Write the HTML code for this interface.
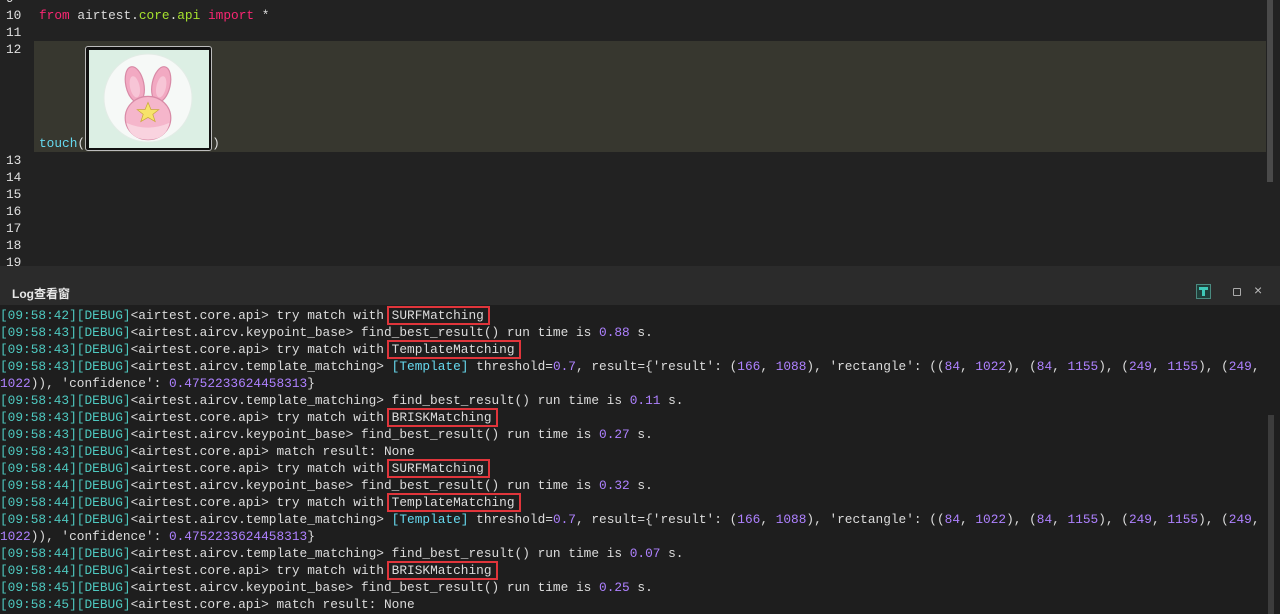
<!DOCTYPE html>
<html><head><meta charset="utf-8"><style>
*{margin:0;padding:0;box-sizing:border-box}
body{width:1280px;height:614px;overflow:hidden;background:#2b2b2b;font-family:"Liberation Mono",monospace;font-size:12.8px;color:#dcdcdc;position:relative}
#ed{position:absolute;left:0;top:0;width:1280px;height:266px;background:#222222;overflow:hidden}
.ln{position:absolute;left:6px;color:#e0e0e0;line-height:17px;font-size:12.8px}
.hl{position:absolute;left:34px;top:41px;width:1232px;height:111px;background:#37372f}
.code{position:absolute;left:39px;line-height:17px;white-space:pre}
.kw{color:#f92672}.gr{color:#a6e22e}.cy{color:#66d9ef}
#sb{position:absolute;left:1267px;top:0;width:6px;height:182px;background:#4a4a4a}
#hdr{position:absolute;left:0;top:278px;width:1280px;height:27px}
#hdr .t{position:absolute;left:12px;top:7px;font-family:"Liberation Sans","Noto Sans CJK SC",sans-serif;font-weight:bold;font-size:12px;color:#e8e8e8}
#log{position:absolute;left:0;top:305px;width:1280px;height:309px;background:#1e1e1e}
.l{position:absolute;left:0;line-height:17px;white-space:pre}
.c{color:#4ec9c0}.n{color:#ae81ff}.b{color:#66d9ef}
.box{outline:2px solid #e0353b;outline-offset:0px;padding:0 4px 0 3px;margin-left:-3px}
#lsb{position:absolute;left:1268px;top:415px;width:6px;height:199px;background:#3c3c3c}
</style></head><body>
<div id="ed">
<div class="ln" style="top:-10px">9</div>
<div class="ln" style="top:7px">10</div>
<div class="ln" style="top:24px">11</div>
<div class="ln" style="top:41px">12</div>
<div class="ln" style="top:152px">13</div>
<div class="ln" style="top:169px">14</div>
<div class="ln" style="top:186px">15</div>
<div class="ln" style="top:203px">16</div>
<div class="ln" style="top:220px">17</div>
<div class="ln" style="top:237px">18</div>
<div class="ln" style="top:254px">19</div>
<div class="code" style="top:7px"><span class="kw">from</span> airtest.<span class="gr">core</span>.<span class="gr">api</span> <span class="kw">import</span> *</div>
<div class="hl"></div>
<div class="code" style="top:135px"><span class="cy">touch</span>(<span style="display:inline-block;width:127px"></span>)</div>
<div style="position:absolute;left:85px;top:46px;width:127px;height:105px;border:1px solid #bdbdbd;border-radius:3px;background:#111;padding:3px">
<svg width="120" height="98" viewBox="0 0 120 98" style="display:block">
<rect width="120" height="98" fill="#dcefe4"/>
<circle cx="59" cy="48" r="44" fill="#f6f9f7" stroke="#e3ece6"/>
<g transform="translate(59 56) scale(1.2) translate(-59 -50)">
<ellipse cx="48" cy="32" rx="7.5" ry="15" fill="#f2a9c2" stroke="#d88aa6" transform="rotate(-12 48 32)"/>
<ellipse cx="70" cy="32" rx="7.5" ry="15" fill="#f2a9c2" stroke="#d88aa6" transform="rotate(12 70 32)"/>
<ellipse cx="48" cy="34" rx="4" ry="9" fill="#f7c5d6" transform="rotate(-12 48 34)"/>
<ellipse cx="70" cy="34" rx="4" ry="9" fill="#f7c5d6" transform="rotate(12 70 34)"/>
<ellipse cx="59" cy="60" rx="19" ry="18" fill="#f5b6cb" stroke="#d88aa6"/>
<path d="M41 64 Q59 72 77 64 Q74 78 59 78 Q44 78 41 64Z" fill="#f9d3df"/>
<polygon points="59,47 61.5,53 68,53 63,57 65,63 59,59.5 53,63 55,57 50,53 56.5,53" fill="#f7e36a" stroke="#c9a83a" stroke-width="0.6"/>
</g>
</svg></div>
<div id="sb"></div>
</div>
<div id="hdr"><div class="t">Log查看窗</div>
<div style="position:absolute;left:1196px;top:6px;width:15px;height:15px;border:1px solid #4a8a80;background:#1f3f3a"><div style="position:absolute;left:2px;top:2px;width:9px;height:3px;background:#3fc9b8"></div><div style="position:absolute;left:5px;top:5px;width:3px;height:6px;background:#3fc9b8"></div></div>
<div style="position:absolute;left:1233px;top:10px;width:8px;height:8px;border:1px solid #aaa;border-radius:1px"></div>
<div style="position:absolute;left:1254px;top:4px;color:#bbb;font-family:'Liberation Sans',sans-serif;font-size:14px">×</div>
</div>
<div id="log">
<div class="l" style="top:2px"><span class="c">[09:58:42][DEBUG]</span>&lt;airtest.core.api&gt; try match with <span class="box">SURFMatching</span></div>
<div class="l" style="top:19px"><span class="c">[09:58:43][DEBUG]</span>&lt;airtest.aircv.keypoint_base&gt; find_best_result() run time is <span class="n">0.88</span> s.</div>
<div class="l" style="top:36px"><span class="c">[09:58:43][DEBUG]</span>&lt;airtest.core.api&gt; try match with <span class="box">TemplateMatching</span></div>
<div class="l" style="top:53px"><span class="c">[09:58:43][DEBUG]</span>&lt;airtest.aircv.template_matching&gt; <span class="b">[Template]</span> threshold=<span class="n">0.7</span>, result={'result': (<span class="n">166</span>, <span class="n">1088</span>), 'rectangle': ((<span class="n">84</span>, <span class="n">1022</span>), (<span class="n">84</span>, <span class="n">1155</span>), (<span class="n">249</span>, <span class="n">1155</span>), (<span class="n">249</span>,</div>
<div class="l" style="top:70px"><span class="n">1022</span>)), 'confidence': <span class="n">0.4752233624458313</span>}</div>
<div class="l" style="top:87px"><span class="c">[09:58:43][DEBUG]</span>&lt;airtest.aircv.template_matching&gt; find_best_result() run time is <span class="n">0.11</span> s.</div>
<div class="l" style="top:104px"><span class="c">[09:58:43][DEBUG]</span>&lt;airtest.core.api&gt; try match with <span class="box">BRISKMatching</span></div>
<div class="l" style="top:121px"><span class="c">[09:58:43][DEBUG]</span>&lt;airtest.aircv.keypoint_base&gt; find_best_result() run time is <span class="n">0.27</span> s.</div>
<div class="l" style="top:138px"><span class="c">[09:58:43][DEBUG]</span>&lt;airtest.core.api&gt; match result: None</div>
<div class="l" style="top:155px"><span class="c">[09:58:44][DEBUG]</span>&lt;airtest.core.api&gt; try match with <span class="box">SURFMatching</span></div>
<div class="l" style="top:172px"><span class="c">[09:58:44][DEBUG]</span>&lt;airtest.aircv.keypoint_base&gt; find_best_result() run time is <span class="n">0.32</span> s.</div>
<div class="l" style="top:189px"><span class="c">[09:58:44][DEBUG]</span>&lt;airtest.core.api&gt; try match with <span class="box">TemplateMatching</span></div>
<div class="l" style="top:206px"><span class="c">[09:58:44][DEBUG]</span>&lt;airtest.aircv.template_matching&gt; <span class="b">[Template]</span> threshold=<span class="n">0.7</span>, result={'result': (<span class="n">166</span>, <span class="n">1088</span>), 'rectangle': ((<span class="n">84</span>, <span class="n">1022</span>), (<span class="n">84</span>, <span class="n">1155</span>), (<span class="n">249</span>, <span class="n">1155</span>), (<span class="n">249</span>,</div>
<div class="l" style="top:223px"><span class="n">1022</span>)), 'confidence': <span class="n">0.4752233624458313</span>}</div>
<div class="l" style="top:240px"><span class="c">[09:58:44][DEBUG]</span>&lt;airtest.aircv.template_matching&gt; find_best_result() run time is <span class="n">0.07</span> s.</div>
<div class="l" style="top:257px"><span class="c">[09:58:44][DEBUG]</span>&lt;airtest.core.api&gt; try match with <span class="box">BRISKMatching</span></div>
<div class="l" style="top:274px"><span class="c">[09:58:45][DEBUG]</span>&lt;airtest.aircv.keypoint_base&gt; find_best_result() run time is <span class="n">0.25</span> s.</div>
<div class="l" style="top:291px"><span class="c">[09:58:45][DEBUG]</span>&lt;airtest.core.api&gt; match result: None</div>
<div id="lsb" style="top:110px"></div>
</div>
</body></html>
